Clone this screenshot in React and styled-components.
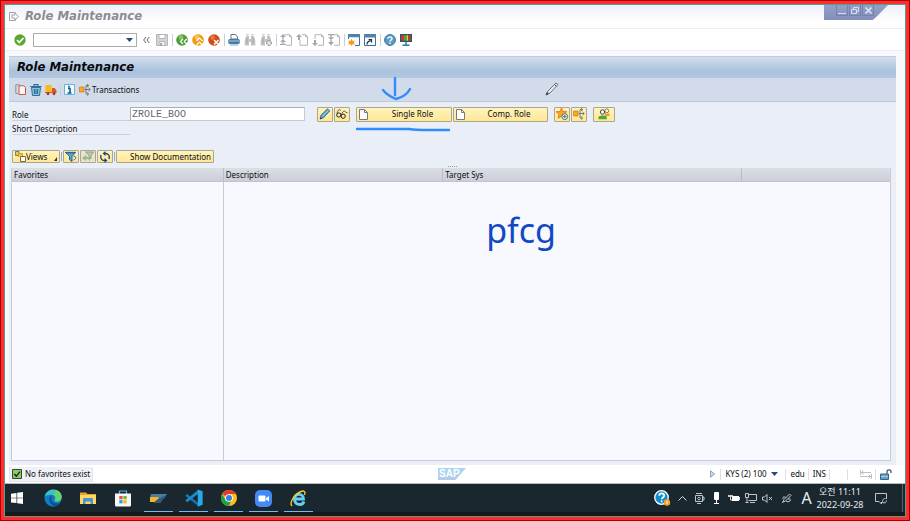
import React from 'react';
import styled, { createGlobalStyle, css } from 'styled-components';

const ui = '"Noto Sans", "Noto Sans CJK KR", sans-serif';
const heading = '"DejaVu Sans Condensed", "DejaVu Sans", sans-serif';

const GlobalStyle = createGlobalStyle`
  *, *::before, *::after { box-sizing: border-box; }
  body { margin: 0; }
  button, input { font: inherit; color: inherit; margin: 0; }
  button { padding: 0; border: 0; background: none; border-radius: 0; }
  svg { display: block; flex: none; overflow: visible; }
`;

/* ---------- page frame ---------- */

const Frame = styled.div`
  height: 100vh;
  min-height: 360px;
  border: 1px solid #a80000;
  background: #ff2d2d;
  padding: 3px;
  font: 8px/12px ${ui};
  color: #0c0e12;
`;

const Screen = styled.div`
  height: 100%;
  display: flex;
  flex-direction: column;
  border: 1px solid #5b9b89;
  background: #f8f8fd;
`;

const TitleBar = styled.header`
  height: 24px;
  flex: none;
  display: flex;
  align-items: flex-start;
  justify-content: space-between;
  padding: 0 17px 0 4px;
  background: linear-gradient(#eef0fa, #ffffff 70%);
  border-bottom: 1px solid #eeeef0;
`;

const WindowTitle = styled.div`
  display: flex;
  align-items: center;
  gap: 6px;
  height: 22px;
  font: italic bold 13px/16px ${heading};
  color: #8b8b92;
`;

const WindowControls = styled.div`
  display: flex;
  gap: 1px;
  width: 64px;
  height: 15px;
  padding: 0 0 0 12px;
  background: linear-gradient(#949fc8, #8490ba);
  clip-path: polygon(0 0, 100% 0, 80% 86%, 76% 100%, 0 100%);
`;

const WindowButton = styled.button`
  width: 12px;
  height: 11px;
  display: grid;
  place-items: center;
  border: 1px solid #7682ae;
  border-top: 0;
`;

const CommandBar = styled.nav`
  height: 22px;
  flex: none;
  display: flex;
  align-items: center;
  gap: 4px;
  padding: 0 9px;
  background: #ffffff;
  border-bottom: 1px solid #ececf2;
`;

const ToolGroup = styled.div`
  display: flex;
  align-items: center;
  gap: ${(p) => (p.$tight ? '3px' : '4px')};
  height: 12px;
  ${(p) => p.$divided && css`
    border-left: 1px solid #c3d0e2;
    padding-left: 3px;
  `}
`;

const ToolButton = styled.button`
  display: flex;
  align-items: center;
  gap: 1px;
  height: 12px;
  white-space: nowrap;
`;

const CommandField = styled.div`
  display: flex;
  align-items: center;
  width: 104px;
  height: 14px;
  margin: 0 2px 0 3px;
  border: 1px solid #a9acb2;
  background: #fff;
`;

const CommandInput = styled.input`
  flex: 1;
  min-width: 0;
  height: 12px;
  border: 0;
  outline: 0;
  padding: 0 3px;
  background: transparent;
`;

const DropButton = styled.button`
  width: 13px;
  height: 12px;
  display: grid;
  place-items: center;
`;

const SaveGroup = styled(ToolGroup)`
  padding-left: 2px;
`;

/* ---------- work area ---------- */

const WorkArea = styled.main`
  position: relative;
  flex: 1;
  min-height: 0;
  display: flex;
  flex-direction: column;
  margin: 5px 9px 0 4px;
  background: #e9eef7;
`;

const WorkTitle = styled.h1`
  flex: none;
  height: 22px;
  margin: 0;
  padding: 0 8px;
  font: italic bold 13px/20px ${heading};
  color: #08090c;
  background: linear-gradient(#d3dfec, #abc2dd 65%, #b3c7e0);
  border-top: 1px solid #bccadb;
`;

const AppToolbar = styled.div`
  flex: none;
  height: 24px;
  display: flex;
  align-items: center;
  gap: 3px;
  padding: 0 6px;
  background: #d2dbe9;
  border-bottom: 1px solid #bfcad9;
`;

const Form = styled.form`
  flex: none;
  padding: 4px 0 0 3px;
`;

const FormRow = styled.div`
  display: flex;
  align-items: center;
  height: ${(p) => (p.$tall ? '16px' : '13px')};
`;

const FieldLabel = styled.label`
  width: 118px;
  height: 13px;
  line-height: 13px;
  border-bottom: 1px solid #ccd2dc;
`;

const RoleInput = styled.input`
  width: 175px;
  height: 14px;
  margin-right: 12px;
  padding: 0 1px;
  border: 1px solid #a9adb5;
  border-right-color: #c6c9d0;
  border-bottom-color: #c6c9d0;
  border-radius: 0;
  outline: 0;
  background: #fff;
  color: #66686e;
  font: 10px/12px "Liberation Mono", monospace;
`;

const ButtonSet = styled.div`
  display: flex;
  gap: 1px;
  margin-right: 6px;
`;

const SapButton = styled.button`
  position: relative;
  display: flex;
  align-items: center;
  justify-content: center;
  width: ${(p) => p.$width || '16px'};
  height: ${(p) => (p.$low ? '13px' : '15px')};
  padding: ${(p) => (p.$start ? '0 2px' : '0')};
  border: 1px solid #aba78f;
  border-radius: 1px;
  background: ${(p) => (p.disabled ? '#e6e4cb' : 'linear-gradient(#fff3bd, #ffe795)')};
  white-space: nowrap;
`;

const ButtonText = styled.span`
  flex: 1;
  text-align: ${(p) => p.$align || 'center'};
  padding-left: ${(p) => (p.$align ? '0' : '8px')};
`;

const ListToolbar = styled.div`
  flex: none;
  display: flex;
  align-items: center;
  gap: 1px;
  height: 13px;
  margin: 15px 0 0 3px;
`;

const Divider = styled.span`
  width: 1px;
  height: 9px;
  background: #a3aab5;
`;

const Splitter = styled.div`
  flex: none;
  height: 5px;
  display: grid;
  place-items: start center;
`;

const ListArea = styled.div`
  position: relative;
  flex: 1;
  min-height: 0;
  margin: 0 5px 4px 2px;
`;

const ListTable = styled.table`
  width: 100%;
  height: 100%;
  table-layout: fixed;
  border-collapse: separate;
  border-spacing: 0;
  border: 1px solid #c7ccd6;
  border-top: 0;

  th {
    height: 14px;
    padding: 0 2px;
    text-align: left;
    font-weight: normal;
    line-height: 13px;
    background: linear-gradient(#dcdee6, #cbced6);
    border-bottom: 1px solid #c0c4ce;
  }
  td { padding: 0; background: #f8f9fe; }
  th + th { border-left: 1px solid #b8bdc8; }
  td:nth-child(2) { border-left: 1px solid #c7cad2; }
`;

const Col = styled.col`
  width: ${(p) => p.$share}%;
`;

/* ---------- pen annotations ---------- */

const PenNote = styled.span`
  position: absolute;
  top: 44px;
  left: 54%;
  font: 34px/36px ${ui};
  color: #1149c4;
`;

const PenStrokes = styled.svg`
  position: absolute;
  left: -1px;
  top: -33px;
  pointer-events: none;
`;

const PenCursor = styled.svg`
  position: absolute;
  right: 38%;
  top: 26px;
`;

/* ---------- status bar ---------- */

const StatusBar = styled.footer`
  flex: none;
  height: 18px;
  display: grid;
  grid-template-columns: 1fr auto 1fr;
  align-items: center;
  padding: 0 10px 0 4px;
  background: #fff;
`;

const Message = styled.div`
  justify-self: start;
  display: flex;
  align-items: center;
  gap: 3px;
  height: 15px;
  padding: 0 2px;
  background: #f0f1f6;
  border: 1px solid #e2e5ec;
  border-top-color: #f0f1f6;
`;

const StatusInfo = styled.div`
  justify-self: end;
  display: flex;
  align-items: center;
`;

const StatusCell = styled.div`
  display: flex;
  align-items: center;
  justify-content: ${(p) => (p.$end ? 'flex-end' : 'flex-start')};
  gap: 4px;
  min-width: ${(p) => p.$min || '0'};
  height: 11px;
  padding: 0 3px 0 4px;
  & + & { border-left: 1px solid #dcdfe8; }
`;

/* ---------- desktop task bar ---------- */

const TaskBar = styled.div`
  flex: none;
  height: 33px;
  display: flex;
  justify-content: space-between;
  background: #1b272e;
  border-top: 1px solid #b5b9bb;
  border-bottom: 4px solid #151a1a;
`;

const TaskGroup = styled.div`
  display: flex;
  & + & { margin-left: 1px; }
`;

const Task = styled.button`
  position: relative;
  width: ${(p) => (p.$start ? '30px' : '35px')};
  height: 28px;
  display: flex;
  align-items: center;
  justify-content: ${(p) => (p.$start ? 'flex-start' : 'center')};
  padding-left: ${(p) => (p.$start ? '6px' : '0')};
  ${(p) => p.$active && css`
    &::after {
      content: '';
      position: absolute;
      left: 3px;
      right: 3px;
      bottom: 0;
      height: 1px;
      background: #76b9ed;
    }
  `}
`;

const Tray = styled.div`
  display: flex;
  align-items: center;
  color: #e9edef;
`;

const TrayButton = styled.button`
  width: ${(p) => p.$width || '17px'};
  height: 28px;
  display: grid;
  place-items: center;
  font: 16px/28px "Noto Sans", sans-serif;
`;

const Clock = styled.time`
  width: 50px;
  text-align: center;
  font: 9px/13px ${ui};
`;

const DesktopEdge = styled.button`
  width: 3px;
  height: 28px;
  margin-left: 6px;
  border-left: 1px solid #59636a;
`;

/* ---------- drawings ---------- */

const Svg = ({ w = 12, h = 12, vw = w, vh = h, children }) => (
  <svg width={w} height={h} viewBox={`0 0 ${vw} ${vh}`} fill="none" aria-hidden="true">{children}</svg>
);

const art = {
  exit: <Svg w={10} h={9}><path d="M6.500.5H.5v8h6V7M3 3v3h3v2l3.500-3.500L6 1v2z" stroke="#9699a3" strokeWidth=".9" /></Svg>,
  check: <Svg><circle cx="6" cy="6" r="5.7" fill="#58a82e" /><path d="M3 6l2.3 2.4L9.5 4" stroke="#fff" strokeWidth="1.8" /></Svg>,
  drop: <Svg w={7} h={4}><path d="M0 0h7L3.5 4z" fill="#254b7e" /></Svg>,
  chevrons: <Svg w={7} h={6}><path d="M3 0L.7 3 3 6M6.3 0L4 3l2.3 3" stroke="#62666d" /></Svg>,
  save: <Svg><path d="M.5.5h11v11H.5z" fill="#d5d5d8" stroke="#b6b6ba" /><path d="M3 .5h6v4H3z" fill="#fff" stroke="#b6b6ba" /><path d="M3 7.5h6v4H3z" fill="#efeff1" stroke="#b6b6ba" /><path d="M4 9h2v3H4z" fill="#a8a8ad" /></Svg>,
  back: <Svg><circle cx="6" cy="6" r="5.8" fill="#4f9d37" /><circle cx="5" cy="3.5" r="2.4" fill="#86c55e" /><path d="M7 5L4.5 7.5 7 10M10.7 5L8.2 7.5l2.5 2.5" stroke="#fff" strokeWidth="1.2" /></Svg>,
  up: <Svg><circle cx="6" cy="6" r="5.8" fill="#f19913" /><circle cx="5" cy="3.5" r="2.4" fill="#ffc34a" /><path d="M4.5 7L7.5 4l3 3M4.5 11l3-3 3 3" stroke="#fff" strokeWidth="1.2" /></Svg>,
  cancel: <Svg><circle cx="6" cy="6" r="5.8" fill="#d24b16" /><circle cx="4.5" cy="3.5" r="2.2" fill="#e77b43" /><path d="M6 6l4.500 4.500M10.500 6L6 10.500" stroke="#fff" strokeWidth="1.5" /></Svg>,
  print: <Svg><path d="M3 5V.5h4.5L9.5 3v2z" fill="#fff" stroke="#69747f" /><rect x=".3" y="5" width="11.4" height="5" rx="1.5" fill="#3f7ba6" /><path d="M1 7h10" stroke="#a9cfe6" /><path d="M2 11h8" stroke="#85a7bf" /></Svg>,
  find: <Svg><path d="M2 2h3v3h2V2h3l1.3 5v4.5H7V8H5v3.5H.7V7z" fill="#c4c4c8" /><path d="M2.5.8h2M7.5.8h2M3 4v6M9 4v6" stroke="#a6a6ab" /></Svg>,
  findNext: <Svg><path d="M2 2h3v3h2V2h3l1 4v2L7 10V8H5v3.5H.7V7z" fill="#c4c4c8" /><path d="M2.5.8h2M7.5.8h2M3 4v6" stroke="#a6a6ab" /><path d="M9 6v6M6 9h6" stroke="#9f9fa5" strokeWidth="2.600" /><path d="M9 7v4M7 9h4" stroke="#fff" strokeWidth="1" /></Svg>,
  firstPage: <Svg><path d="M4.500.7h5l2 2v8.600H6M9.500.7v2h2" stroke="#b4b4b9" /><path d="M3 0L0 3h6zM2.300 3h1.400v2H2.300zM3 5L0 8h6zM2.300 8h1.400v1.500H2.300zM0 9.800h6V11H0z" fill="#a6a6ab" /></Svg>,
  prevPage: <Svg><path d="M6 .7h3.500l2 2v8.600H4V6M9.500.7v2h2" stroke="#b4b4b9" /><path d="M3 0L0 3h2v3h2V3h2z" fill="#a6a6ab" /></Svg>,
  nextPage: <Svg><path d="M3 5V.7h6.500l2 2v8.600H6M9.500.7v2h2" stroke="#b4b4b9" /><path d="M3 12L0 9h2V6h2v3h2z" fill="#a6a6ab" /></Svg>,
  lastPage: <Svg><path d="M4.500.7h5l2 2v8.600H6M9.500.7v2h2" stroke="#b4b4b9" /><path d="M0 0h6v1.200H0zM2.300 1.200h1.400v2H2.300zM0 3.200h6L3 6zM2.300 6h1.400v2H2.300zM0 8h6l-3 3.500z" fill="#a6a6ab" /></Svg>,
  newSession: <Svg><path d="M0 0h12v3.500H0z" fill="#4d82aa" /><path d="M.5 3v2M11.500 3v8.500H7" stroke="#3d6f97" /><path d="M1 3.500h10V11H6L1 6z" fill="#f7fbff" /><path d="M3.500 4.800l1 2.200 2.300-.5-1 2.100 1 2-2.300-.4-1 1.800-1-1.800-2.300.4 1-2-1-2.100 2.300.5z" fill="#f79a16" /></Svg>,
  shortcut: <Svg><path d="M.5.5h11v11H.5z" fill="#f7fbff" stroke="#3d6f97" /><path d="M0 0h12v3.5H0z" fill="#4d82aa" /><path d="M3 10.5C3 8 4 7 6.5 6.8M4.6 5.7h2.900v2.900" stroke="#222c35" strokeWidth="1.2" /></Svg>,
  help: <Svg><circle cx="6" cy="6" r="5.4" fill="#5b9bc4" stroke="#3a7298" /><path d="M4 4.7C4 2.3 8 2.3 8 4.7 8 6 6 6 6 7.4M6 8.6V10" stroke="#fff" strokeWidth="1.4" /></Svg>,
  monitor: <Svg><path d="M0 0h12v8H0z" fill="#1f5a72" /><path d="M1.2 1.2H4v5.5H1.2z" fill="#d5382a" /><path d="M4 1.2h2.7v5.5H4z" fill="#45a838" /><path d="M6.7 1.2h1.5v5.5H6.7z" fill="#f2d025" /><path d="M8.2 1.2h2.6v5.5H8.2z" fill="#c5382e" /><path d="M6 8v3M2.5 11.3h7" stroke="#2d7ba3" strokeWidth="1.5" /></Svg>,
  copy: <Svg><path d="M5 .8H.8v8.7H3" stroke="#8a8f99" /><path d="M4 1.8h4.8l1.700 1.700v7H4z" fill="#f9f3f1" stroke="#c25742" /></Svg>,
  trash: <Svg><path d="M1.5 3.5h9l-1 8h-7z" fill="#92bfdc" stroke="#2f6f9c" /><path d="M.3 2.5h11.4M4 2V.6h4V2M4.3 5l.3 5M6 5v5M7.7 5l-.3 5" stroke="#2f6f9c" strokeWidth="1.1" /></Svg>,
  truck: <Svg><path d="M.5 1h6v7h-6z" fill="#fdb717" /><path d="M7 4h2.6l1.9 2.5V9H0V8h7z" fill="#d5562b" /><circle cx="3" cy="9.8" r="1.4" fill="#8c3c21" /><circle cx="9" cy="9.8" r="1.4" fill="#8c3c21" /></Svg>,
  info: <Svg w={11} h={11}><path d="M.5.5h10v10H.5z" fill="#f5fbff" stroke="#63b4dc" /><path d="M4 4.500h2V9M3.500 9h4M5 1.800v1.600" stroke="#11629a" strokeWidth="1.7" /></Svg>,
  branch: <Svg><path d="M.5 3h4.500v5H.5z" fill="#fda818" stroke="#c07d1f" strokeWidth=".7" /><path d="M5.500 5.500H11M7 5.500v-4h2M7 5.500V10h2M8 0l1.800 1.500L8 3M9.500 3.800l1.800 1.700-1.800 1.700M8 8.500L9.800 10 8 11.500" stroke="#686d75" strokeWidth=".9" /></Svg>,
  pencil: <Svg><path d="M1 11l1-3.800L8.500.7l2.300 2.300L4.200 10z" fill="#5b9cc8" stroke="#2f6487" strokeWidth=".8" /><path d="M3.300 8.300l6-6" stroke="#b9dcf0" /><path d="M1 11l.5-1.7 1.2 1.2z" fill="#222" /></Svg>,
  glasses: <Svg><path d="M1 5.500C1.500 1.500 4 1 4.800 2.500M5.500 6.500C6.500 3 9 2 10 4.500l1.500.2" stroke="#4b4a3e" strokeWidth=".9" /><circle cx="2.8" cy="7" r="2.1" stroke="#24241e" /><circle cx="7.200" cy="8.200" r="2.1" stroke="#24241e" /></Svg>,
  page: <Svg w={9} h={11}><path d="M.5.5h5l3 3v7h-8z" fill="#fff" stroke="#777b80" /><path d="M5.5.5v3h3" stroke="#777b80" /></Svg>,
  star: <Svg><path d="M5.5 0l1.4 3.5 4 .2-3 2.5 1 4-3.4-2.1-3.3 2.1.8-4L0 3.7l4-.2z" fill="#f9a331" stroke="#d96b14" strokeWidth=".8" /><circle cx="8.8" cy="8.6" r="2.9" fill="#fff" stroke="#476f78" /><path d="M8.8 6.8v3.6M7 8.6h3.6" stroke="#467b37" /></Svg>,
  users: <Svg><circle cx="8.8" cy="2.8" r="1.9" fill="#fff4d4" stroke="#6f604e" strokeWidth=".8" /><path d="M7 5.500h4.500V8H7z" fill="#ed9b31" /><circle cx="4.5" cy="4" r="2.2" fill="#f4eee0" stroke="#465055" /><path d="M.5 11.3V9C1.5 7 8 7 8.8 9v2.3z" fill="#56a634" /></Svg>,
  views: <Svg w={11} h={11}><path d="M3.500 4.500h-3v-4H4v2" fill="#fec53b" stroke="#4c8a97" /><path d="M3.500 6V2.500h4V5" fill="#fec53b" stroke="#d39a26" /><path d="M5.500 5.500h5v5h-5z" fill="#fff" stroke="#7e6d34" /></Svg>,
  filter: <Svg><path d="M.5 1.500h10L7 5.300v5.200l-2.500-1.800V5.300z" fill="#5aa0cc" stroke="#276991" /><path d="M.5 1.500h10" stroke="#2265a0" strokeWidth="1.400" /><path d="M8.500 5.500C11.500 4.500 11.500 8.500 8.500 9" stroke="#2265a0" /></Svg>,
  filterOff: <Svg><path d="M3.500 1h8L9 4.5v3H7.2v-3z" fill="#c1c5b6" stroke="#989e8c" /><path d="M0 7l4-3v1.700c3 0 4 2 4 5C7 8.500 6 8 4 8v2z" fill="#9bb98a" /></Svg>,
  refresh: <Svg><path d="M6 2.500C9 2 11.300 5 10 8M6 9.500C3 10 .7 7 2 4" stroke="#20437c" strokeWidth="1.4" /><path d="M6.500 0v5L3.500 2.500zM5.500 7v5l3-2.500z" fill="#20437c" /></Svg>,
  corner: <Svg w={3} h={9}><path d="M3 5v4H0z" fill="#333" /></Svg>,
  ok: <Svg w={10} h={10}><path d="M.5.5h9v9h-9z" fill="#8ccb68" stroke="#33482d" /><path d="M2.3 5l2 2.2L8 2.7" stroke="#14230f" strokeWidth="1.3" /></Svg>,
  play: <Svg w={5} h={8}><path d="M.5.7v6.6L4.6 4z" fill="#c6d9f1" stroke="#7593ba" strokeWidth=".8" /></Svg>,
  swap: <Svg w={12} h={9}><path d="M.5 0v5M1 2.5h10M3.5.5l-2 2 2 2M11.5 4v5M0 6.5h11M8.5 4.5l2 2-2 2" stroke="#aaaeb6" strokeWidth=".8" /></Svg>,
  lock: <Svg w={12} h={11}><path d="M7 5V2.7C7 .2 11 .2 11 2.7V4" stroke="#404c58" strokeWidth="1.2" /><path d="M.5 5h8v5.5h-8z" fill="#679fc6" stroke="#2f678e" /><path d="M1 7.5h7" stroke="#a9d0e7" /></Svg>,
  minimize: <Svg w={8} h={7}><path d="M0 6.500h8" stroke="#d6def5" /></Svg>,
  restore: <Svg w={8} h={7}><path d="M2.5 2.5V.5h5v4H5.5M.5 2.5h5v4h-5z" stroke="#d6def5" /></Svg>,
  close: <Svg w={7} h={7}><path d="M.5.5l6 6M6.5.5l-6 6" stroke="#dfe6fa" strokeWidth="1.6" /></Svg>,
  windows: <Svg w={12} h={12}><path d="M0 1.7l5.5-.8v4.8H0zM6.2.8L12 0v5.7H6.2zM0 6.3h5.5v4.8L0 10.4zM6.2 6.3H12V12l-5.8-.8z" fill="#fff" /></Svg>,
  edge: (
    <Svg w={18} h={18} vw={24} vh={24}>
      <circle cx="12" cy="12" r="11.5" fill="#137cc5" />
      <path d="M1 10C2 4 7 .5 12.5.5 19 .5 23.5 5 23.5 10.5c0 4-3 6-6.5 6-2.5 0-3.5-1-2.5-2.3 2-3-.5-6.7-5-6.7C5.5 7.5 2 8.5 1 10z" fill="#3bc3c1" />
      <path d="M15 1c5.5 1 8.5 5 8.5 9.5 0 4-3 6-6.5 6-2.5 0-3.5-1-2.5-2.3 2-2 1-4.2-1-5.4z" fill="#63d36b" />
      <path d="M9.5 9C5 12 7 20 13 22.5 17 23 20.5 21 22 18c-5 2.5-12 1-12-5 0-1.7.4-3-.5-4z" fill="#0c4f9c" />
    </Svg>
  ),
  folder: <Svg w={16} h={14}><path d="M0 1.500h6L7.500 3H16v10H0z" fill="#e7a52d" /><path d="M0 4h16v9H0z" fill="#ffd862" /><path d="M3 13V8.500C3 7.500 3.500 7 4.500 7h7c1 0 1.500.5 1.500 1.500V13h-2.500v-2.500h-5V13z" fill="#4a93d7" /></Svg>,
  store: <Svg w={18} h={17}><path d="M5.500 4V1h7v3" stroke="#57b4e4" strokeWidth="1.2" /><path d="M1 3.500h16V15c0 1-.5 1.500-1.500 1.500h-13C1.500 16.500 1 16 1 15z" fill="#f5f6f6" /><path d="M5.300 6h3.300v3.300H5.300z" fill="#ee5130" /><path d="M9.400 6h3.300v3.300H9.400z" fill="#73b629" /><path d="M5.300 10.100h3.300v3.300H5.300z" fill="#22a0e5" /><path d="M9.400 10.100h3.300v3.300H9.400z" fill="#fcb714" /></Svg>,
  sapLogon: <Svg w={17} h={9}><path d="M1 0h16l-3 4.500H0z" fill="#4f7d9e" /><path d="M0 3h8l2 3-2 2H0z" fill="#f9b52a" /><path d="M8 5l8-4-5.500 8H3z" fill="#335979" /></Svg>,
  code: <Svg w={18} h={18} vw={24} vh={24}><path d="M1 8l2-1.500L18 19v4L1 9.500z" fill="#1177b5" /><path d="M1 16l2 1.500L18 6V1L1 14.500z" fill="#178bce" /><path d="M17 .5L23.500 3v18L17 23.500z" fill="#29a8ec" /></Svg>,
  chrome: (
    <Svg w={16} h={16} vw={24} vh={24}>
      <circle cx="12" cy="12" r="12" fill="#fbc116" />
      <path d="M12 12L1.600 6A12 12 0 0 1 22.400 6H12z" fill="#e33b2e" />
      <path d="M12 24A12 12 0 0 1 1.600 6L7 15l5 2.500 3-1z" fill="#259b4c" />
      <circle cx="12" cy="12" r="5.8" fill="#fff" /><circle cx="12" cy="12" r="4.5" fill="#3b7ce5" />
    </Svg>
  ),
  zoom: <Svg w={17} h={17}><rect width="17" height="17" rx="5" fill="#4389f7" /><rect x="3.5" y="5.500" width="7" height="6" rx="1" fill="#fff" /><path d="M11 8l3-2v5.500L11 9.500z" fill="#fff" /></Svg>,
  explorer: <Svg w={17} h={17}><path d="M14 11.500C12.500 16 4.500 15.500 4.500 9S13.500 3 13.500 9H5" stroke="#62d1f6" strokeWidth="2.8" /><path d="M2 16C-1 13 4 4.500 11 1.500c3-1.300 5 0 3.500 3.500" stroke="#f4ca35" strokeWidth="1.4" /></Svg>,
  trayHelp: <Svg w={17} h={16}><circle cx="7.5" cy="7.5" r="6.8" fill="#118dcc" stroke="#fff" strokeWidth="1.3" /><path d="M5.200 5.800c0-3.300 5-3 5 0 0 1.800-2.500 1.700-2.500 3.500M7.700 10.500v1.700" stroke="#fff" strokeWidth="1.7" /><circle cx="13" cy="12.5" r="3.2" fill="#f4a222" /><path d="M13 10.800v3.400" stroke="#fff" /></Svg>,
  chevron: <Svg w={9} h={5}><path d="M.5 4.500l4-4 4 4" stroke="#d7dcdf" /></Svg>,
  camera: <Svg w={10} h={11}><path d="M1 .5h6M.5 2.500h7v6h-7zM7.500 4h1.500v3H7.500M2 10.500h4" stroke="#d2d7da" strokeWidth=".9" /><circle cx="4" cy="5.5" r="1.3" stroke="#d2d7da" strokeWidth=".8" /></Svg>,
  mic: <Svg w={7} h={12}><rect x="1" y="0" width="5" height="8" rx="1" fill="#fff" /><path d="M3.500 8v3M1 11.500h5" stroke="#fff" /></Svg>,
  battery: <Svg w={12} h={8}><path d="M0 1h5v2H0z" fill="#c6cbce" /><path d="M2.500 3v3h2M11.500 3v3" stroke="#dbe0e2" /><path d="M4 2h7v5H4z" fill="#fff" /></Svg>,
  network: <Svg w={12} h={10}><path d="M3.500 1.500h8v6h-8M5 9.500h5M.5.500h3v4h-3zM2 4.500v5M.5 9.500h3" stroke="#d2d7da" strokeWidth=".9" /></Svg>,
  mute: <Svg w={11} h={9}><path d="M.5 3h2L5 .5v8L2.500 6h-2zM7 3l3 3M10 3L7 6" stroke="#d2d7da" strokeWidth=".9" /></Svg>,
  pen: <Svg w={10} h={10}><path d="M.5 9.500l1.500-3L7.500 1 9 2.500 3.500 8zM1 6C0 4 3 3 4 5M6 6c2-1 3 1 2 2-1 1-3 1-4 0" stroke="#d2d7da" strokeWidth=".9" /></Svg>,
  note: <Svg w={12} h={11}><path d="M11.500 6V.5H.5v8h3.500l2.500 2.500v-2" stroke="#d2d7da" strokeWidth=".9" /><path d="M10.500 5.500c-3 0-3 2.500-3 4 2 1 4 0 4-2" stroke="#d2d7da" strokeWidth=".9" /></Svg>,
};

const SapMark = styled.div`
  width: 28px;
  height: 12px;
  padding-left: 1px;
  clip-path: polygon(0 0, 100% 0, 62% 100%, 0 100%);
  background: linear-gradient(#a5d9f3, #b3cbe9);
  color: #fff;
  font: bold 10px/12px "Liberation Sans", sans-serif;
`;

/* ---------- content ---------- */

const Tool = ({ icon, label, text }) => (
  <ToolButton type="button" aria-label={label} title={label}>{art[icon]}{text}</ToolButton>
);

const commandGroups = [
  [['back', 'Back'], ['up', 'Exit'], ['cancel', 'Cancel']],
  [['print', 'Print'], ['find', 'Find'], ['findNext', 'Find Next']],
  [['firstPage', 'First Page'], ['prevPage', 'Previous Page'], ['nextPage', 'Next Page'], ['lastPage', 'Last Page']],
  [['newSession', 'New Session'], ['shortcut', 'Create Shortcut']],
  [['help', 'Help'], ['monitor', 'Customize Layout']],
];

const pinnedApps = [['edge', 'Edge'], ['folder', 'File Explorer'], ['store', 'Store']];
const runningApps = [['sapLogon', 'SAP Logon'], ['code', 'Visual Studio Code'], ['chrome', 'Chrome'], ['zoom', 'Zoom'], ['explorer', 'Internet Explorer']];
const trayItems = [
  ['trayHelp', 'Get Help', '23px'], ['chevron', 'Hidden icons'], ['camera', 'Camera'], ['mic', 'Microphone'],
  ['battery', 'Power'], ['network', 'Network'], ['mute', 'Volume'], ['pen', 'Pen', '22px'],
];

export default function App() {
  return (
    <Frame>
      <GlobalStyle />
      <Screen>
        <TitleBar>
          <WindowTitle>{art.exit}Role Maintenance</WindowTitle>
          <WindowControls>
            <WindowButton type="button" aria-label="Minimize">{art.minimize}</WindowButton>
            <WindowButton type="button" aria-label="Restore">{art.restore}</WindowButton>
            <WindowButton type="button" aria-label="Close">{art.close}</WindowButton>
          </WindowControls>
        </TitleBar>

        <CommandBar aria-label="System functions">
          <Tool icon="check" label="Enter" />
          <CommandField>
            <CommandInput aria-label="Transaction code" />
            <DropButton type="button" aria-label="Show history">{art.drop}</DropButton>
          </CommandField>
          <ToolGroup>
            <Tool icon="chevrons" label="Hide command field" />
          </ToolGroup>
          <SaveGroup>
            <Tool icon="save" label="Save" />
          </SaveGroup>
          {commandGroups.map((group) => (
            <ToolGroup key={group[0][0]} $divided>
              {group.map(([icon, label]) => <Tool key={icon} icon={icon} label={label} />)}
            </ToolGroup>
          ))}
        </CommandBar>

        <WorkArea>
          <WorkTitle>Role Maintenance</WorkTitle>
          <AppToolbar>
            <ToolGroup $tight>
              <Tool icon="copy" label="Copy role" />
              <Tool icon="trash" label="Delete role" />
              <Tool icon="truck" label="Transport role" />
            </ToolGroup>
            <ToolGroup $divided>
              <Tool icon="info" label="Information" />
              <Tool icon="branch" label="Transactions" text="Transactions" />
            </ToolGroup>
          </AppToolbar>

          <Form onSubmit={(e) => e.preventDefault()}>
            <FormRow $tall>
              <FieldLabel htmlFor="role">Role</FieldLabel>
              <RoleInput id="role" defaultValue="ZROLE_BOO" />
              <ButtonSet>
                <SapButton type="button" aria-label="Change">{art.pencil}</SapButton>
                <SapButton type="button" aria-label="Display">{art.glasses}</SapButton>
              </ButtonSet>
              <ButtonSet>
                <SapButton type="button" $width="96px" $start>
                  {art.page}
                  <ButtonText>Single Role</ButtonText>
                  <PenStrokes width="98" height="58" viewBox="0 0 98 58" fill="none" stroke="#2f8cff" strokeWidth="2.4" strokeLinecap="round" strokeLinejoin="round">
                    <path d="M39 3v17M27 15c4 5 8 7 13 9 6-2 11-4 14-10" />
                    <path d="M1 54h52c6 1 12 1 20 1l20 0" />
                  </PenStrokes>
                </SapButton>
                <SapButton type="button" $width="95px" $start>{art.page}<ButtonText>Comp. Role</ButtonText></SapButton>
              </ButtonSet>
              <ButtonSet>
                <SapButton type="button" aria-label="Add to favorites">{art.star}</SapButton>
                <SapButton type="button" aria-label="Where used">{art.branch}</SapButton>
              </ButtonSet>
              <SapButton type="button" $width="22px" aria-label="Users">{art.users}</SapButton>
            </FormRow>
            <FormRow><FieldLabel as="span">Short Description</FieldLabel></FormRow>
          </Form>

          <ListToolbar>
            <SapButton type="button" $low $start $width="48px">
              {art.views}<ButtonText $align="left">Views</ButtonText>{art.corner}
            </SapButton>
            <Divider />
            <SapButton type="button" $low aria-label="Filter">{art.filter}</SapButton>
            <SapButton type="button" $low disabled aria-label="Delete filter">{art.filterOff}</SapButton>
            <SapButton type="button" $low aria-label="Refresh">{art.refresh}</SapButton>
            <Divider />
            <SapButton type="button" $low $start $width="98px"><ButtonText $align="right">Show Documentation</ButtonText></SapButton>
          </ListToolbar>

          <Splitter>
            <Svg w={10} h={4}><path d="M0 3.500h10" stroke="#8f98a6" strokeDasharray="1 1" /></Svg>
          </Splitter>
          <ListArea>
            <ListTable>
              <colgroup><Col $share={24} /><Col $share={25} /><Col $share={34} /><Col $share={17} /></colgroup>
              <thead>
                <tr><th>Favorites</th><th>Description</th><th>Target Sys</th><th aria-label="Empty" /></tr>
              </thead>
              <tbody>
                <tr><td /><td /><td /><td /></tr>
              </tbody>
            </ListTable>
            <PenNote>pfcg</PenNote>
          </ListArea>
          <PenCursor width="14" height="14" viewBox="0 0 14 14" fill="none">
            <path d="M1.500 12.500l1.500-3.500L11 1l2 1.500L5 11z" fill="#e8ecf2" stroke="#6b7079" />
            <path d="M1 13l1-2.500 1.500 1.500zM9.500 2.500l2 1.800" fill="#333" stroke="#555" />
          </PenCursor>
        </WorkArea>

        <StatusBar>
          <Message role="status">{art.ok}No favorites exist</Message>
          <SapMark>SAP</SapMark>
          <StatusInfo>
            <StatusCell $min="14px">{art.play}</StatusCell>
            <StatusCell $min="65px">KYS (2) 100{art.drop}</StatusCell>
            <StatusCell>edu</StatusCell>
            <StatusCell>INS</StatusCell>
            <StatusCell $min="18px" />
            <StatusCell $min="28px" $end>{art.swap}</StatusCell>
            <StatusCell>{art.lock}</StatusCell>
          </StatusInfo>
        </StatusBar>

        <TaskBar>
          <TaskGroup>
            <TaskGroup>
              <Task type="button" $start aria-label="Start">{art.windows}</Task>
              {pinnedApps.map(([icon, label]) => <Task key={icon} type="button" aria-label={label}>{art[icon]}</Task>)}
            </TaskGroup>
            <TaskGroup>
              {runningApps.map(([icon, label]) => <Task key={icon} type="button" $active aria-label={label}>{art[icon]}</Task>)}
            </TaskGroup>
          </TaskGroup>
          <Tray>
            {trayItems.map(([icon, label, width]) => (
              <TrayButton key={icon} type="button" $width={width} aria-label={label}>{art[icon]}</TrayButton>
            ))}
            <TrayButton type="button" aria-label="Input language A">A</TrayButton>
            <Clock dateTime="2022-09-28T11:11">오전 11:11<br />2022-09-28</Clock>
            <TrayButton type="button" $width="31px" aria-label="Notifications">{art.note}</TrayButton>
            <DesktopEdge type="button" aria-label="Show desktop" />
          </Tray>
        </TaskBar>
      </Screen>
    </Frame>
  );
}
